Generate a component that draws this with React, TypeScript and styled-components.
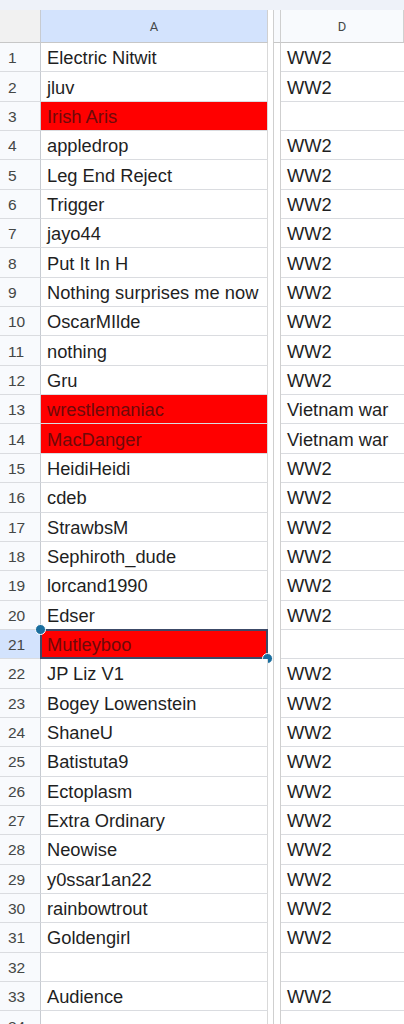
import styled, { createGlobalStyle } from "styled-components";

const GlobalStyle = createGlobalStyle`
  body {
    margin: 0;
    background: #ffffff;
    font-family: "Liberation Sans", Arial, sans-serif;
    overflow: hidden;
  }
`;

const rows: { a: string; d: string; red?: boolean }[] = [
  { a: "Electric Nitwit", d: "WW2" },
  { a: "jluv", d: "WW2" },
  { a: "Irish Aris", d: "", red: true },
  { a: "appledrop", d: "WW2" },
  { a: "Leg End Reject", d: "WW2" },
  { a: "Trigger", d: "WW2" },
  { a: "jayo44", d: "WW2" },
  { a: "Put It In H", d: "WW2" },
  { a: "Nothing surprises me now", d: "WW2" },
  { a: "OscarMIlde", d: "WW2" },
  { a: "nothing", d: "WW2" },
  { a: "Gru", d: "WW2" },
  { a: "wrestlemaniac", d: "Vietnam war", red: true },
  { a: "MacDanger", d: "Vietnam war", red: true },
  { a: "HeidiHeidi", d: "WW2" },
  { a: "cdeb", d: "WW2" },
  { a: "StrawbsM", d: "WW2" },
  { a: "Sephiroth_dude", d: "WW2" },
  { a: "lorcand1990", d: "WW2" },
  { a: "Edser", d: "WW2" },
  { a: "Mutleyboo", d: "", red: true },
  { a: "JP Liz V1", d: "WW2" },
  { a: "Bogey Lowenstein", d: "WW2" },
  { a: "ShaneU", d: "WW2" },
  { a: "Batistuta9", d: "WW2" },
  { a: "Ectoplasm", d: "WW2" },
  { a: "Extra Ordinary", d: "WW2" },
  { a: "Neowise", d: "WW2" },
  { a: "y0ssar1an22", d: "WW2" },
  { a: "rainbowtrout", d: "WW2" },
  { a: "Goldengirl", d: "WW2" },
  { a: "", d: "" },
  { a: "Audience", d: "WW2" },
  { a: "", d: "" },
];

const SELECTED = 21;

const TopBand = styled.div`
  height: 10px;
  background: #eef2f9;
`;

const Grid = styled.div`
  display: grid;
  grid-template-columns: 41px 227px 13px 1fr;
`;

const HeaderRow = styled(Grid)`
  height: 33px;
`;

const Row = styled(Grid)`
  height: 29.35px;
`;

const Corner = styled.div`
  background: #f1f1f1;
  border-right: 1px solid #c7cbd1;
  border-bottom: 1px solid #c7c7c7;
`;

const ColHead = styled.div<{ $active?: boolean }>`
  display: flex;
  align-items: center;
  justify-content: center;
  font-family: Roboto, "Liberation Sans", sans-serif;
  font-size: 13px;
  color: #444746;
  background: ${(p) => (p.$active ? "#d3e3fd" : "#f8fafd")};
  border-bottom: 1px solid #c7c7c7;
  border-right: 1px solid #d0d0d0;
`;

const Freeze = styled.div<{ $head?: boolean }>`
  border-left: 1px solid #cfcfcf;
  border-right: 1px solid #cfcfcf;
  margin: 0 0 0 5px;
  width: 6px;
  background: ${(p) => (p.$head ? "#f8fafd" : "#ffffff")};
  border-bottom: ${(p) => (p.$head ? "1px solid #c7c7c7" : "none")};
`;

const RowNum = styled.div<{ $active?: boolean }>`
  display: flex;
  align-items: center;
  padding: 2px 0 0 8px;
  font-size: 15.5px;
  color: #444746;
  background: ${(p) => (p.$active ? "#d3e3fd" : "#f8fafd")};
  border-right: 1px solid #c7cbd1;
  border-bottom: 1px solid #dadce0;
`;

const Cell = styled.div<{ $red?: boolean }>`
  position: relative;
  display: flex;
  align-items: center;
  padding: 2px 0 0 6px;
  font-size: 18.3px;
  white-space: nowrap;
  overflow: visible;
  color: ${(p) => (p.$red ? "#6e0a0a" : "#1f1f1f")};
  background: ${(p) => (p.$red ? "#ff0000" : "#ffffff")};
  border-right: 1px solid #d9d9d9;
  border-bottom: 1px solid #dadce0;
`;

const DCell = styled(Cell)`
  border-right: none;
`;

const Selection = styled.div`
  position: absolute;
  left: -1px;
  top: -1px;
  right: -1px;
  bottom: -1px;
  border: 2px solid #3c4a68;
  pointer-events: none;
`;

const Handle = styled.span<{ $pos: "tl" | "br" }>`
  position: absolute;
  width: 11px;
  height: 11px;
  border-radius: 50%;
  background: #1a6e9e;
  border: 1px solid #ffffff;
  box-sizing: border-box;
  ${(p) => (p.$pos === "tl" ? "left: -7px; top: -7px;" : "right: -7px; bottom: -7px;")}
`;

export default function App() {
  return (
    <>
      <GlobalStyle />
      <TopBand />
      <HeaderRow>
        <Corner />
        <ColHead $active>A</ColHead>
        <Freeze $head />
        <ColHead>D</ColHead>
      </HeaderRow>
      {rows.map((r, i) => {
        const n = i + 1;
        const sel = n === SELECTED;
        return (
          <Row key={n}>
            <RowNum $active={sel}>{n}</RowNum>
            <Cell $red={r.red}>
              {r.a}
              {sel && (
                <Selection>
                  <Handle $pos="tl" />
                  <Handle $pos="br" />
                </Selection>
              )}
            </Cell>
            <Freeze />
            <DCell>{r.d}</DCell>
          </Row>
        );
      })}
    </>
  );
}
